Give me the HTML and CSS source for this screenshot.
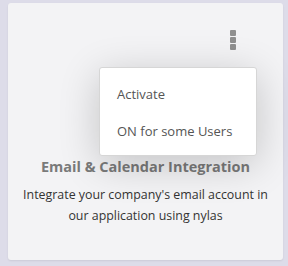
FILE: index.html
```html
<!DOCTYPE html>
<html lang="en">
<head>
    <meta charset="UTF-8">
    <title>Integration card</title>
    <link rel="stylesheet" href="styles.css">
</head>
<body>
    <div class="card">
        <div class="card-top">
            <button class="more-btn" aria-label="More">
                <span></span><span></span><span></span>
            </button>
            <!-- dropdown menu -->
            <ul class="menu">
                <li>Activate</li>
                <li>ON for some Users</li>
            </ul>
        </div>
        <h3 class="card-title">Email &amp; Calendar Integration</h3>
        <p class="card-desc">Integrate your company's email account in our application using nylas</p>
    </div>
</body>
</html>
```

FILE: styles.css
```css
* {
    margin: 0;
    padding: 0;
    box-sizing: border-box;
}

body {
    background: #dddce9;
    font-family: 'Open Sans', sans-serif;
    padding: 3px 5px 6px 8px;
    height: 266px;
    overflow: hidden;
}

.card {
    background: #f3f3f5;
    border-radius: 3px;
    height: 257px;
    box-shadow: 0 1px 2px rgba(0, 0, 0, 0.08);
    padding: 27px 0 0;
    text-align: center;
}

.card-top {
    position: relative;
    height: 127px;
}

.more-btn {
    display: flex;
    flex-direction: column;
    gap: 1px;
    margin-left: 222px;
    border: none;
    background: none;
    padding: 0;
    cursor: pointer;
}

.more-btn span {
    width: 6px;
    height: 6px;
    border-radius: 1px;
    background: #8f8f8f;
}

.menu {
    position: absolute;
    top: 37px;
    left: 91px;
    width: 158px;
    height: 89px;
    list-style: none;
    background: #fff;
    border: 1px solid #d6d6d6;
    border-radius: 3px;
    box-shadow: 0 8px 40px rgba(0, 0, 0, 0.2);
    padding: 17px 0 0 17px;
    text-align: left;
    z-index: 10;
}

.menu li {
    font-size: 13px;
    color: #555;
    line-height: 18px;
    margin-bottom: 19px;
    cursor: pointer;
}

.card-title {
    font-size: 14.5px;
    font-weight: 700;
    color: #7a7a7a;
    line-height: 20px;
}

.card-desc {
    font-size: 12.4px;
    color: #333;
    line-height: 21px;
    margin: 7px auto 0;
    width: 250px;
}
```
